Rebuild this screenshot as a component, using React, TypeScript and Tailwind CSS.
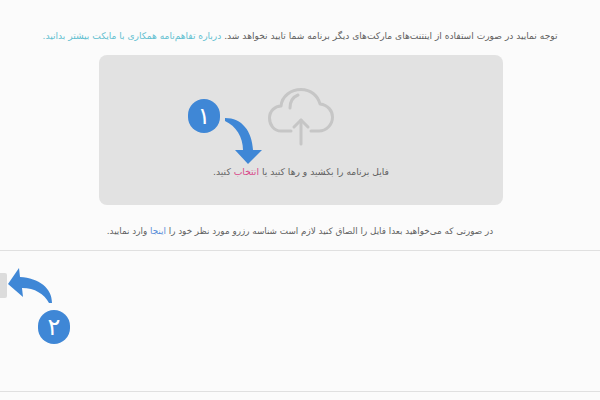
import React from 'react'

const font = { fontFamily: '"DejaVu Sans", sans-serif' }

const Badge: React.FC<{ label: string; className: string }> = ({ label, className }) => (
  <div className={`absolute w-[32px] h-[34px] rounded-full bg-[#3f87d6] text-white flex items-center justify-center text-[24px] leading-none ${className}`}>
    {label}
  </div>
)

const CloudIcon = () => (
  <svg width="66" height="58" viewBox="0 0 66 58" fill="none" stroke="#c6c6c6" strokeWidth="3" strokeLinecap="round" strokeLinejoin="round">
    <path d="M23 43H13C6 43 1.5 37 1.5 30C1.5 23 7 18 13 18C14 8 23 1.5 33 1.5C43 1.5 50 8 52 16C60 17 64.5 23 64.5 29C64.5 37 58 43 51 43H43" />
    <path d="M22 20C22 13 25 9 30 7" />
    <path d="M33 56V32" />
    <path d="M26 39L33 32L40 39" />
  </svg>
)

export default function App() {
  return (
    <div dir="rtl" style={font} className="relative w-[600px] h-[400px] overflow-hidden bg-[#fbfbfb] text-[#5f5f5f] flex flex-col">
      <div className="h-[55px] pt-[28px] flex justify-center">
        <p className="text-[9.1px] leading-[16px] whitespace-nowrap">
          توجه نمایید در صورت استفاده از اینتنت‌های مارکت‌های دیگر برنامه شما تایید نخواهد شد.{' '}
          <a className="text-[#62bfd0]">درباره تفاهم‌نامه همکاری با مایکت بیشتر بدانید.</a>
        </p>
      </div>

      <div className="mr-[97px] w-[404px] h-[150px] rounded-[8px] bg-[#e2e2e2] flex flex-col items-center pt-[33px]">
        <CloudIcon />
        <p className="mt-[18px] text-[9.2px] leading-[16px] whitespace-nowrap">
          فایل برنامه را بکشید و رها کنید یا <span className="text-[#d9488a]">انتخاب</span> کنید.
        </p>
      </div>

      <div className="h-[45px] pt-[18px] flex justify-center">
        <p className="text-[8.8px] leading-[16px] whitespace-nowrap">
          در صورتی که می‌خواهید بعدا فایل را الصاق کنید لازم است شناسه رزرو مورد نظر خود را{' '}
          <a className="text-[#5b8fd9]">اینجا</a> وارد نمایید.
        </p>
      </div>

      <div className="h-[142px] pt-[22px] border-t border-b border-[#e0e0e0] flex justify-end">
        <div className="w-[7px] h-[25px] rounded-r-[2px] bg-[#dcdcdc]" />
      </div>

      {/* step 1 */}
      <Badge label="۱" className="left-[188px] top-[99px]" />
      <svg className="absolute left-[220px] top-[115px]" width="44" height="50" viewBox="0 0 44 50" fill="#3f87d6">
        <path d="M5 3C22 3 32 16 33 35H42L28 49L15 35H23C23 22 16 11 5 6Z" />
      </svg>

      {/* step 2 */}
      <Badge label="۲" className="left-[38px] top-[310px]" />
      <svg className="absolute left-[8px] top-[266px]" width="46" height="40" viewBox="0 0 46 40" fill="#3f87d6">
        <path d="M0 18L11 2L12 11C31 12 44 22 44 37H41C36 28 27 22 14 22L15 31Z" />
      </svg>
    </div>
  )
}
